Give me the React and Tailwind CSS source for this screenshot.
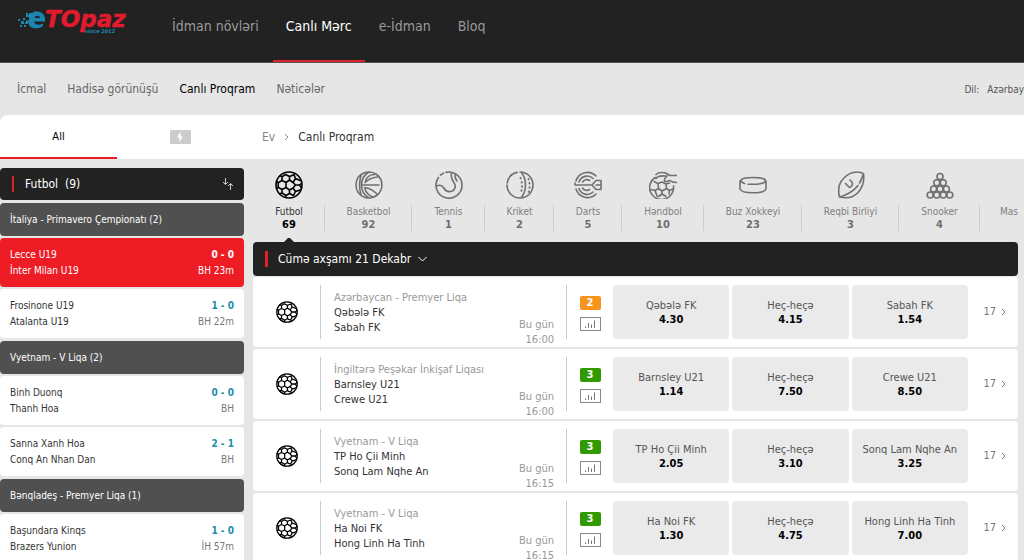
import React from "react";

const topLinks = ["İdman növləri", "Canlı Mərc", "e-İdman", "Bloq"];
const subLinks = ["İcmal", "Hadisə görünüşü", "Canlı Proqram", "Nəticələr"];

const leagues = [
  {
    name: "İtaliya - Primavero Çempionatı (2)",
    matches: [
      { home: "Lecce U19", away: "İnter Milan U19", score: "0 - 0", time: "BH 23m", active: true },
      { home: "Frosinone U19", away: "Atalanta U19", score: "1 - 0", time: "BH 22m" },
    ],
  },
  {
    name: "Vyetnam - V Liqa (2)",
    matches: [
      { home: "Binh Duonq", away: "Thanh Hoa", score: "0 - 0", time: "BH" },
      { home: "Sanna Xanh Hoa", away: "Conq An Nhan Dan", score: "2 - 1", time: "BH" },
    ],
  },
  {
    name: "Bənqladeş - Premyer Liqa (1)",
    matches: [{ home: "Başundara Kinqs", away: "Brazers Yunion", score: "1 - 0", time: "İH 57m" }],
  },
];

const events = [
  { league: "Azərbaycan - Premyer Liqa", home: "Qəbələ FK", away: "Sabah FK", time: "16:00", badge: 2, odds: ["4.30", "4.15", "1.54"] },
  { league: "İngiltərə Peşəkar İnkişaf Liqası", home: "Barnsley U21", away: "Crewe U21", time: "16:00", badge: 3, odds: ["1.14", "7.50", "8.50"] },
  { league: "Vyetnam - V Liqa", home: "TP Ho Çii Minh", away: "Sonq Lam Nqhe An", time: "16:15", badge: 3, odds: ["2.05", "3.10", "3.25"] },
  { league: "Vyetnam - V Liqa", home: "Ha Noi FK", away: "Hong Linh Ha Tinh", time: "16:15", badge: 3, odds: ["1.30", "4.75", "7.00"] },
];

function Icon({ children, className = "size-[28px]" }) {
  return (
    <svg viewBox="0 0 28 28" className={className} fill="none" stroke="currentColor" strokeWidth="1.6" strokeLinecap="round" strokeLinejoin="round" aria-hidden="true">
      {children}
    </svg>
  );
}

function Football({ className }) {
  return (
    <Icon className={className}>
      <circle cx="14" cy="14" r="13" />
      <path d="M7 9.5 11 11.5V16.5L7 18.5 3.2 16.3V11.7ZM11 11.5 14.5 9 18 11.5 20.5 14 18 17 14.5 19 11 16.5M20.5 14H24.5M18 11.5 20.5 7.5 25 9.5M24.5 14 26.8 12M24.5 14 26.5 17M14.5 9V5.5L10.5 3.5 7 5.8V9.5M14.5 5.5 19 3.8 20.5 7.5M7 18.5V22L11 24.5 14.5 22.5V19M14.5 22.5 18.5 24.5M18 17 20.5 20.5 18.5 24.5M20.5 20.5 25 19M3.2 11.7 1.5 10.5M3.2 16.3 1.8 17.5M11 24.5 10.5 26.3M7 5.8 5 4.8M7 22 4.8 22.8" />
    </Icon>
  );
}

function Basketball() {
  return (
    <Icon>
      <path d="M10 1.6A13 13 0 1 1 10 26.4M10 1.6C3.5 4 1 9 1 14s2.5 10 9 12.400M6 4.500C4 11 4 17 6 23.500M14 1C8 4.500 6.500 10 6.500 14S8 23.500 14 27M10.500 10C11.500 6.500 15 3.500 19.500 3.500M10 11.500C13 8.500 17 6.500 22.500 6M7 14H24M9.500 16.500C14 17 19 20 22 23M10 18C11 21.500 14 24.500 18 26" />
    </Icon>
  );
}

function Tennis() {
  return (
    <Icon>
      <path d="M11 1.400A13 13 0 0 1 27 14 13 13 0 1 1 3.500 6.500M5.500 4.200A13 13 0 0 1 8.500 2.200M16.500 1.500C15.500 6 16.500 8 18.500 11M1.200 15.500C3 13.500 6.500 13.800 8.500 16.500 10.500 20 12.500 21 15.500 20.500 20.500 19.500 21.500 14.500 18.500 11M20.500 2.800C19.500 5.500 20 7.500 22 10" />
    </Icon>
  );
}

function Cricket() {
  return (
    <Icon>
      <path d="M11 1.400A13 13 0 0 0 1.200 12M1 14A13 13 0 1 0 14 1M15 1C21 8 21 20 15 27" />
      <path strokeDasharray="0.500 3.700" strokeWidth="1.900" d="M14.500 7C16.500 12 16.500 17 14.500 23M22.500 8C24 12 24 17 22.500 22" />
    </Icon>
  );
}

function Darts() {
  return (
    <Icon>
      <path d="M22 5A12 12 0 0 0 2 10M1 12V14H18L22 9.500H27V18.500H22L18 14M22 14H27M2 18A12 12 0 0 0 22 23M19 7.500A8.500 8.500 0 0 0 5 11M5 17.500A8.500 8.500 0 0 0 19 21M15.500 9.500A5 5 0 0 0 8.500 11M8.500 17A5 5 0 0 0 15.500 18.500" />
    </Icon>
  );
}

function Handball() {
  return (
    <Icon>
      <path d="M6 6.500A12 12 0 1 0 24.500 15M7 7.500C9 4 14 5 18 5M7 3.500C9 1 15 1 17.500 2.500L21 4.500H27.500M18 5C15 8 14 11 18 10.500L21 9.500M21 9.500C23 11.500 25 11.500 27.500 11.500" />
      <path d="M9 12.500 13 11 17 13 17.500 17.500 13 20 9.500 17.500ZM9 12.500 5 10.500M9.500 17.500 6 19.500 2 18.500M6 19.500 8 25M13 20V23L9.500 25.500M13 23 17 25.500M17.500 17.500 20.500 19.500 24 18M20.500 19.500 20 23M17 13 20.500 12" />
    </Icon>
  );
}

function Puck() {
  return (
    <Icon>
      <path d="M5.500 12.500C-1 10 1 6.500 14 6.500S29 10 24 12C21.500 13 18 13.300 14 13.300H9M1 10V18C3 23 25 23 27 18V10" />
    </Icon>
  );
}

function Rugby() {
  return (
    <Icon>
      <path d="M26.500 3C27.500 10 26 16 21 21.500 16 27 9 27.500 2.500 26 1 20 1 13 6.500 7.500 12 1.500 18 0 24 1.500L26.500 3C25 6 24.500 9 22.500 12M2.500 26C9 24.500 17 20 21 14.500M8.500 12.500 12.500 16.500C15 15.500 16.500 13 14.500 10.500L13 9" />
    </Icon>
  );
}

function Snooker() {
  const balls = [[14, 5.5], [10.8, 11.8], [17.2, 11.8], [7.6, 18], [14, 18], [20.4, 18], [4.2, 24], [10.7, 24], [17.3, 24], [23.8, 24]];
  return (
    <Icon>
      {balls.map(([x, y]) => (
        <circle key={`${x}-${y}`} cx={x} cy={y} r="3" />
      ))}
    </Icon>
  );
}

const sports = [
  { name: "Futbol", count: 69, icon: Football, width: "w-[72px]", active: true },
  { name: "Basketbol", count: 92, icon: Basketball, width: "w-[87px]" },
  { name: "Tennis", count: 1, icon: Tennis, width: "w-[73px]" },
  { name: "Kriket", count: 2, icon: Cricket, width: "w-[69px]" },
  { name: "Darts", count: 5, icon: Darts, width: "w-[68px]" },
  { name: "Həndbol", count: 10, icon: Handball, width: "w-[82px]" },
  { name: "Buz Xokkeyi", count: 23, icon: Puck, width: "w-[98px]" },
  { name: "Reqbi Birliyi", count: 3, icon: Rugby, width: "w-[97px]" },
  { name: "Snooker", count: 4, icon: Snooker, width: "w-[81px]" },
];

function Logo() {
  return (
    <svg viewBox="0 0 112 28" className="h-[28px] w-[112px] overflow-visible" role="img" aria-label="eTopaz">
      <g fill="#1c86b0">
        <path d="M1 12h2v2H1zM4 14h3v3H4zM3 18h2v2H3zM6 11h2v2H6zM8 15h3v2H8zM9 6h2v2H9zM7 18h2v2H7z" />
        <path fillRule="evenodd" d="M12 6h4V5C22 3.500 28 6 28 12V14.500H17C17.500 18 23 18.500 26.500 16.500L25.500 19.500C20 23 11.500 21.500 11.500 15.500H9v-2h3V10H9V8h3zM17.500 11H23C22.500 8 18.500 8 17.500 11Z" />
      </g>
      <text x="28" y="20" fill="#e31b2e" stroke="#e31b2e" strokeWidth="0.4" fontFamily="'DejaVu Sans', sans-serif" fontSize="23" fontWeight="700" fontStyle="italic">TOpaz</text>
      <text x="68" y="26" fill="#1c86b0" fontFamily="'DejaVu Sans', sans-serif" fontSize="5" fontWeight="700" fontStyle="italic">since 2012</text>
    </svg>
  );
}

function LiveMatch({ match }) {
  const { home, away, score, time, active } = match;
  return (
    <a href="#match" className={`flex h-[49px] items-center justify-between rounded px-[10px] pt-px text-[10px] leading-4 ${active ? "bg-[#ee1c25] text-white" : "bg-white text-[#333]"}`}>
      <span>
        <span className="block">{home}</span>
        <span className="block">{away}</span>
      </span>
      <span className="text-right">
        <span className={`block font-bold ${active ? "" : "text-[#1a8cad]"}`}>{score}</span>
        <span className={`block ${active ? "" : "text-[#777]"}`}>{time}</span>
      </span>
    </a>
  );
}

function EventRow({ event }) {
  const { league, home, away, time, badge, odds } = event;
  const names = [home, "Heç-heçə", away];
  return (
    <article className="flex h-[70px] items-center rounded bg-white pr-3">
      <div className="flex w-[67px] shrink-0 justify-center text-black">
        <Football className="size-[22px]" />
      </div>
      <div className="h-[54px] w-px shrink-0 bg-[#ccc]" />
      <div className="flex w-[245px] shrink-0 justify-between self-stretch pr-3 pl-[13px] text-[11px] leading-[15px]">
        <div className="pt-[13px] whitespace-nowrap text-[#333]">
          <p className="text-[#999]">{league}</p>
          <p>{home}</p>
          <p>{away}</p>
        </div>
        <p className="self-end text-right text-[#999]">
          Bu gün
          <br />
          {time}
        </p>
      </div>
      <div className="h-[54px] w-px shrink-0 bg-[#ccc]" />
      <div className="flex w-[46px] shrink-0 flex-col items-center gap-[7px] pt-[3px]">
        <span className={`flex h-[14px] w-[21px] items-center justify-center rounded-[2px] text-[11px] font-bold text-white ${badge === 2 ? "bg-[#f7941e]" : "bg-[#339900]"}`}>{badge}</span>
        <button aria-label="Statistika" className="flex h-[14px] w-[21px] items-center justify-center border border-[#888]">
          <svg viewBox="0 0 10 8" className="h-2 w-[10px]" fill="none" stroke="#777" aria-hidden="true">
            <path d="M.5 8V6.500M3.500 8V3M6.500 8V4.500M9.500 8V.5" />
          </svg>
        </button>
      </div>
      <div className="grid flex-1 grid-cols-3 gap-[3px]">
        {names.map((name, i) => (
          <button key={name} className="h-[54px] rounded bg-[#eaeaea] pt-[2px] text-center text-[11px] leading-[14px] whitespace-nowrap text-[#555]">
            <span className="block">{name}</span>
            <span className="block font-bold text-black">{odds[i]}</span>
          </button>
        ))}
      </div>
      <a href="#markets" className="flex w-[38px] shrink-0 items-center justify-end gap-[5px] text-[11px] text-[#777]">
        17
        <svg viewBox="0 0 5 8" className="h-2 w-[5px]" fill="none" stroke="currentColor" aria-hidden="true">
          <path d="m1 1 3 3-3 3" />
        </svg>
      </a>
    </article>
  );
}

export default function App() {
  return (
    <div className="h-screen overflow-hidden bg-[#e6e6e6] font-['DejaVu_Sans_Condensed','DejaVu_Sans',sans-serif] text-[#333]">
      <header className="flex h-[63px] items-start border-b border-[#555] bg-[#222]">
        <a href="#home" className="w-[142px] shrink-0 pt-[7px] pl-[17px]">
          <Logo />
        </a>
        <nav className="flex h-[62px] gap-px pl-[17px] text-sm">
          {topLinks.map((label, i) => (
            <a key={label} href="#top" className={`flex items-center border-b-2 px-[13px] pb-[8px] ${i === 1 ? "border-[#d8232a] text-white" : "border-transparent text-[#999]"}`}>
              {label}
            </a>
          ))}
        </nav>
      </header>

      <div className="flex h-[52px] items-center justify-between overflow-hidden whitespace-nowrap">
        <nav className="flex gap-[21px] pl-[17px] text-xs">
          {subLinks.map((label, i) => (
            <a key={label} href="#sub" className={i === 2 ? "text-black" : "text-[#666]"}>
              {label}
            </a>
          ))}
        </nav>
        <div className="flex gap-2 text-[10px] text-[#555]">
          <span>Dil:</span>
          <span>Azərbay</span>
        </div>
      </div>

      <div className="flex h-[44px] rounded-tl-lg bg-white">
        <div className="flex w-[253px] shrink-0">
          <button className="w-[117px] border-b-2 border-[#ee1c25] pt-[3px] text-[11px] text-black">All</button>
          <button aria-label="Canlı" className="flex w-[126px] items-center justify-center">
            <span className="flex h-[14px] w-[21px] items-center justify-center rounded-[1px] bg-[#ccc]">
              <svg viewBox="0 0 8 10" className="h-[10px] w-2" fill="#fff" aria-hidden="true">
                <path d="M4.500 0 1 5.500h2.300L3.500 10 7 4.500H4.700z" />
              </svg>
            </span>
          </button>
        </div>
        <nav className="flex items-center gap-[9px] pl-[9px] text-xs">
          <a href="#home" className="text-[#888]">Ev</a>
          <svg viewBox="0 0 5 8" className="h-2 w-[5px]" fill="none" stroke="#888" aria-hidden="true">
            <path d="m1 1 3 3-3 3" />
          </svg>
          <span>Canlı Proqram</span>
        </nav>
      </div>

      <div className="flex items-start">
        <aside className="flex w-[244px] shrink-0 flex-col gap-[2px] pt-[9px]">
          <h2 className="flex h-8 items-center rounded bg-[#222] px-3 text-xs text-white">
            <span className="mr-[11px] h-4 w-[2px] bg-[#d8232a]" />
            <span className="flex-1 whitespace-pre">Futbol  (9)</span>
            <svg viewBox="0 0 12 12" className="-mr-[2px] size-3" fill="none" stroke="#ccc" aria-hidden="true">
              <path d="M3.500 0v6.500M1 4l2.500 2.500L6 4M8.500 12V5.500M6 8l2.500-2.500L11 8" />
            </svg>
          </h2>
          {leagues.map((league) => (
            <section key={league.name} className="flex flex-col gap-[2px] pt-px">
              <h3 className="flex h-[33px] items-center rounded bg-[#505050] px-[10px] text-[10px] text-white">{league.name}</h3>
              {league.matches.map((match) => (
                <LiveMatch key={match.home} match={match} />
              ))}
            </section>
          ))}
        </aside>

        <main className="ml-[9px] min-w-0 flex-1 pr-[6px]">
          <div className="flex h-[83px]">
            {sports.map(({ name, count, icon: SportIcon, width, active }) => (
              <button key={name} className={`relative flex shrink-0 flex-col items-center pt-3 text-[10px] leading-[13px] whitespace-nowrap ${width} ${active ? "text-black" : "text-[#707070]"}`}>
                <SportIcon />
                <span className={`mt-[6px] ${active ? "text-[#333]" : "text-[#808080]"}`}>{name}</span>
                <span className="text-[11px] leading-[13px] font-bold">{count}</span>
                <span className="absolute top-[46px] right-0 h-[26px] w-px bg-[#ccc]" />
                {active && (
                  <svg viewBox="0 0 10 4" className="absolute bottom-0 h-1 w-[10px]" fill="#222" aria-hidden="true">
                    <path d="M0 4 4 0h2l4 4z" />
                  </svg>
                )}
              </button>
            ))}
            <button className="flex items-start pt-[46px] pl-5 text-[10px] leading-[13px] text-[#808080]">Mas</button>
          </div>
          <h2 className="mb-px flex h-[34px] items-center rounded bg-[#222] px-3 text-xs text-white">
            <span className="mr-[10px] h-4 w-[3px] bg-[#e3202b]" />
            <button className="flex items-center gap-[7px]">
              Cümə axşamı 21 Dekabr
              <svg viewBox="0 0 9 6" className="h-[6px] w-[9px]" fill="none" stroke="currentColor" aria-hidden="true">
                <path d="m.5 1 4 4 4-4" />
              </svg>
            </button>
          </h2>
          <div className="flex flex-col gap-[2px]">
            {events.map((event) => (
              <EventRow key={event.home} event={event} />
            ))}
          </div>
        </main>
      </div>
    </div>
  );
}
